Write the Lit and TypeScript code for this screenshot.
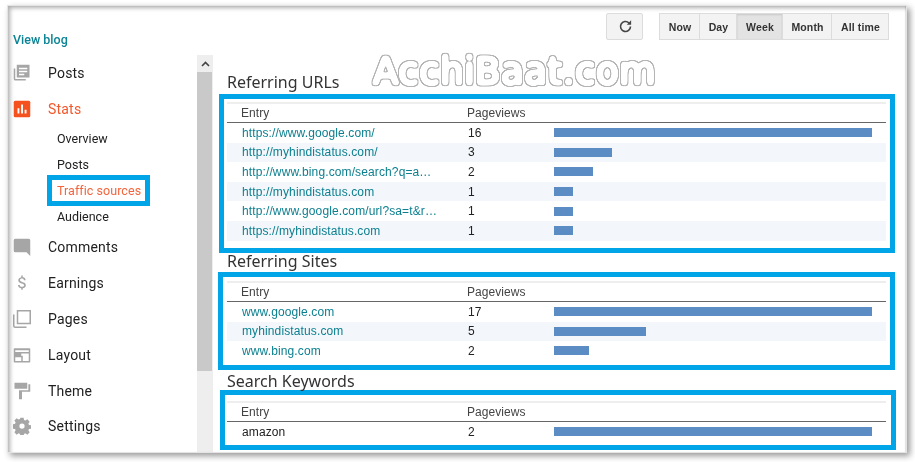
import { LitElement, html, css, svg } from "lit";
import { customElement } from "lit/decorators.js";

type Row = { label: string; views: number; width: number; plain?: boolean };

const urls: Row[] = [
  { label: "https://www.google.com/", views: 16, width: 318 },
  { label: "http://myhindistatus.com/", views: 3, width: 58 },
  { label: "http://www.bing.com/search?q=a…", views: 2, width: 39 },
  { label: "http://myhindistatus.com", views: 1, width: 19 },
  { label: "http://www.google.com/url?sa=t&r…", views: 1, width: 19 },
  { label: "https://myhindistatus.com", views: 1, width: 19 },
];
const sites: Row[] = [
  { label: "www.google.com", views: 17, width: 318 },
  { label: "myhindistatus.com", views: 5, width: 92 },
  { label: "www.bing.com", views: 2, width: 35 },
];
const keywords: Row[] = [{ label: "amazon", views: 2, width: 318, plain: true }];

const icons = {
  posts: svg`<path d="M1 6h2v14h14v2H3a2 2 0 0 1-2-2zM5 1h17v17H5zM8 5v2h11V5zm0 4v2h11V9zm0 4v2h7v-2z" fill-rule="evenodd"/>`,
  stats: svg`<rect x="1" y="1" width="22" height="22" rx="2" fill="#f4511e"/><path d="M6 11h2.5v7H6zM10.800 6h2.500v12h-2.500zM15.500 13H18v5h-2.500z" fill="#fff"/>`,
  comments: svg`<path d="M1 3a2 2 0 0 1 2-2h18a2 2 0 0 1 2 2v21l-5-5H3a2 2 0 0 1-2-2z"/>`,
  earnings: svg`<path d="M11 2h2v2.100c2.300.4 3.700 1.900 3.900 4.200h-2.300c-.2-1.500-1.200-2.300-2.600-2.300-1.600 0-2.700.8-2.700 2.100 0 1.300 1 1.800 3 2.400 2.800.8 4.800 1.700 4.800 4.400 0 2.300-1.600 3.700-4.100 4.100V21h-2v-2c-2.500-.4-4.300-1.900-4.400-4.400h2.300c.2 1.600 1.300 2.500 3.100 2.500 1.800 0 2.800-.9 2.800-2.100 0-1.400-1.200-1.900-3.300-2.500-2.500-.7-4.500-1.600-4.500-4.200 0-2.200 1.700-3.700 4-4.100z"/>`,
  pages: svg`<path d="M0 6h2v15a1 1 0 0 0 1 1h15v2H3a3 3 0 0 1-3-3zM5 0h19v19H5zm2 2v15h15V2z" fill-rule="evenodd"/>`,
  layout: svg`<path d="M2 3h20a1 1 0 0 1 1 1v17a1 1 0 0 1-1 1H2a1 1 0 0 1-1-1V4a1 1 0 0 1 1-1zm1 5h18V5.500H3zm0 2v10h8v-5H3zm0 0h8v3h2v7h8V10z" fill-rule="evenodd"/>`,
  theme: svg`<path d="M2 1h17v8H2zM20.500 3H23v10H12v10H8V11h12.500z" fill-rule="evenodd"/>`,
  settings: svg`<path d="M12 8.500a3.500 3.500 0 1 0 0 7 3.500 3.500 0 0 0 0-7zM9.800 1h4.400l.5 3 1.800.8 2.600-1.700 3.100 3.100-1.700 2.500.8 1.900 3 .5v4.400l-3 .5-.8 1.800 1.700 2.600-3.100 3.100-2.600-1.700-1.800.8-.5 3H9.800l-.5-3-1.800-.8-2.600 1.700-3.100-3.100 1.700-2.600-.8-1.800-3-.5V9.600l3-.5.8-1.900-1.700-2.500 3.100-3.100 2.600 1.700 1.800-.8z" fill-rule="evenodd"/>`,
};

@customElement("app-root")
export class AppRoot extends LitElement {
  static styles = css`
    :host { display: block; width: 915px; height: 462px; background: #fff; overflow: hidden; font-family: Roboto, "Liberation Sans", sans-serif; }
    .frame { position: relative; box-sizing: border-box; display: flex; width: 898px; height: 446px; margin: 6px 0 0 8px; background: #fff; overflow: hidden; box-shadow: 0 0 0 1px #e4e4e4; }
    .shade { position: absolute; inset: 0; pointer-events: none; box-shadow: inset 5px 5px 4px -3px rgba(0,0,0,.32), inset -1px 0 1px rgba(0,0,0,.12); }
    .wrap { filter: drop-shadow(3px 3px 3px rgba(0,0,0,.4)); }

    .side { width: 189px; flex: none; }
    .view { height: 49px; box-sizing: border-box; padding: 27px 0 0 5px; font-size: 12.500px; line-height: 14px; font-weight: 500; color: #0b8596; }
    .item { display: flex; align-items: center; height: 36px; font-size: 14px; letter-spacing: .2px; color: #212121; }
    .item svg { width: 18px; height: 18px; margin-right: 17px; margin-left: 5px; fill: #a6a6a6; flex: none; }
    .item.active { color: #f4572a; }
    .item.last { margin-top: -1px; }
    .subs { margin-top: -2px; }
    .sub { display: flex; align-items: center; height: 26px; padding-left: 49px; font-size: 12.500px; color: #212121; }
    .sub span { position: relative; }
    .sub .on { color: #f4643c; letter-spacing: .05px; }
    .mark { position: absolute; left: -10px; top: -8px; width: 103px; height: 31px; box-sizing: border-box; border: 5px solid #00a5e8; }

    .bar { flex: none; width: 16px; margin-top: 49px; background: #eee; }
    .up { height: 17px; display: flex; align-items: center; justify-content: center; }
    .up svg { width: 9px; height: 6px; }
    .thumb { height: 299px; width: 15px; background: #c9c9c9; }

    .main { position: relative; flex: 1; min-width: 0; }
    .tools { display: flex; justify-content: flex-end; gap: 16px; padding: 7px 17px 0 0; height: 27px; }
    .btn { box-sizing: border-box; height: 27px; display: flex; align-items: center; justify-content: center; padding-left: 1px; background: #f3f3f3; border: 1px solid #dcdcdc; font: bold 10.500px "Liberation Sans", Arial, sans-serif; letter-spacing: .15px; color: #333; }
    .refresh { width: 37px; border-radius: 2px; }
    .refresh svg { width: 15px; height: 15px; }
    .group { display: flex; border-radius: 2px; }
    .group .btn + .btn { border-left: 0; }
    .group .sel { background: #e3e3e3; box-shadow: inset 0 1px 2px rgba(0,0,0,.12); }

    h2 { margin: 0; padding-left: 14px; font: 400 16px/20px "Noto Sans", "Open Sans", sans-serif; color: #333; }
    h2.first { margin-top: 34px; height: 20px; position: relative; top: -2px; }
    h2.next { height: 19px; line-height: 17px; }
    h2.third { height: 20px; line-height: 22px; }

    .box { box-sizing: border-box; border: 5px solid #00a5e8; margin-left: 6px; width: 676px; padding: 3px 4px 0 3px; }
    .box.b2 { margin-left: 5px; width: 677px; padding: 4px 4px 0 4px; height: 98px; }
    .box.b3 { margin-left: 7px; width: 676px; padding: 6px 5px 0 2px; height: 60px; }
    .box.b1 { height: 159px; }

    .head { display: flex; align-items: center; height: 18px; border-top: 2px solid #eee; border-bottom: 1px solid #666; font: 12px/16px "Liberation Sans", Arial, sans-serif; letter-spacing: .05px; color: #444; }
    .row { display: flex; align-items: center; height: 19.600px; font: 12px/16px "Liberation Sans", Arial, sans-serif; color: #222; }
    .row.alt { background: #f3f6fb; }
    .entry { width: 240px; box-sizing: border-box; padding-left: 14px; flex: none; }
    .row .entry { padding-left: 15px; color: #0b7f8f; letter-spacing: .12px; white-space: nowrap; }
    .row.plain .entry { color: #222; }
    .count { width: 87px; flex: none; }
    .row .count { padding-left: 1px; box-sizing: border-box; }
    .fill { height: 9px; background: #5b8cc4; }

    .wm { position: absolute; left: 150px; top: 36px; width: 310px; height: 56px; overflow: visible; pointer-events: none; }
    .wm text { font: 400 37px "DejaVu Sans", sans-serif; fill: #000; letter-spacing: .6px; }
  `;

  private table(rows: Row[]) {
    return html`
      <div class="head"><div class="entry">Entry</div><div class="count">Pageviews</div></div>
      ${rows.map(
        (r, i) => html`<div class="row ${i % 2 ? "alt" : ""} ${r.plain ? "plain" : ""}">
          <div class="entry">${r.label}</div>
          <div class="count">${r.views}</div>
          <div class="fill" style="width:${r.width}px"></div>
        </div>`
      )}
    `;
  }

  private item(name: keyof typeof icons, label: string, cls = "") {
    return html`<div class="item ${cls}"><svg viewBox="0 0 24 24">${icons[name]}</svg>${label}</div>`;
  }

  render() {
    return html`
      <div class="wrap">
        <div class="frame">
          <div class="side">
            <div class="view">View blog</div>
            ${this.item("posts", "Posts")}
            ${this.item("stats", "Stats", "active")}
            <div class="subs">
              <div class="sub">Overview</div>
              <div class="sub">Posts</div>
              <div class="sub"><span class="on"><i class="mark"></i>Traffic sources</span></div>
              <div class="sub">Audience</div>
            </div>
            ${this.item("comments", "Comments")}
            ${this.item("earnings", "Earnings")}
            ${this.item("pages", "Pages")}
            ${this.item("layout", "Layout")}
            ${this.item("theme", "Theme")}
            ${this.item("settings", "Settings", "last")}
          </div>
          <div class="bar">
            <div class="up"><svg viewBox="0 0 9 6"><path d="M1 5l3.500-3.500L8 5" fill="none" stroke="#444" stroke-width="1.600"/></svg></div>
            <div class="thumb"></div>
          </div>
          <div class="main">
            <div class="tools">
              <div class="btn refresh"><svg viewBox="0 0 24 24"><path d="M20 12a8 8 0 1 1-2.600-5.900" fill="none" stroke="#444" stroke-width="2.600"/><path d="M21 2v7h-7z" fill="#444"/></svg></div>
              <div class="group">
                <div class="btn" style="width:41px">Now</div>
                <div class="btn" style="width:37px">Day</div>
                <div class="btn sel" style="width:46px">Week</div>
                <div class="btn" style="width:49px">Month</div>
                <div class="btn" style="width:57px">All time</div>
              </div>
            </div>
            <h2 class="first">Referring URLs</h2>
            <div class="box b1">${this.table(urls)}</div>
            <h2 class="next">Referring Sites</h2>
            <div class="box b2">${this.table(sites)}</div>
            <h2 class="third">Search Keywords</h2>
            <div class="box b3">${this.table(keywords)}</div>
            <svg class="wm" viewBox="0 0 310 56">
              <defs>
                <filter id="outline" x="-5%" y="-20%" width="110%" height="140%">
                  <feGaussianBlur in="SourceAlpha" stdDeviation="1.600" result="b"/>
                  <feComponentTransfer in="b" result="fat"><feFuncA type="linear" slope="12" intercept="-1.200"/></feComponentTransfer>
                  <feMorphology in="fat" operator="dilate" radius="0.800" result="outer"/>
                  <feComposite in="outer" in2="fat" operator="out" result="ring"/>
                  <feFlood flood-color="#b4b4b4"/>
                  <feComposite in2="ring" operator="in"/>
                </filter>
              </defs>
              <text x="10" y="42" filter="url(#outline)">AcchiBaat.com</text>
            </svg>
          </div>
          <div class="shade"></div>
        </div>
      </div>
    `;
  }
}
